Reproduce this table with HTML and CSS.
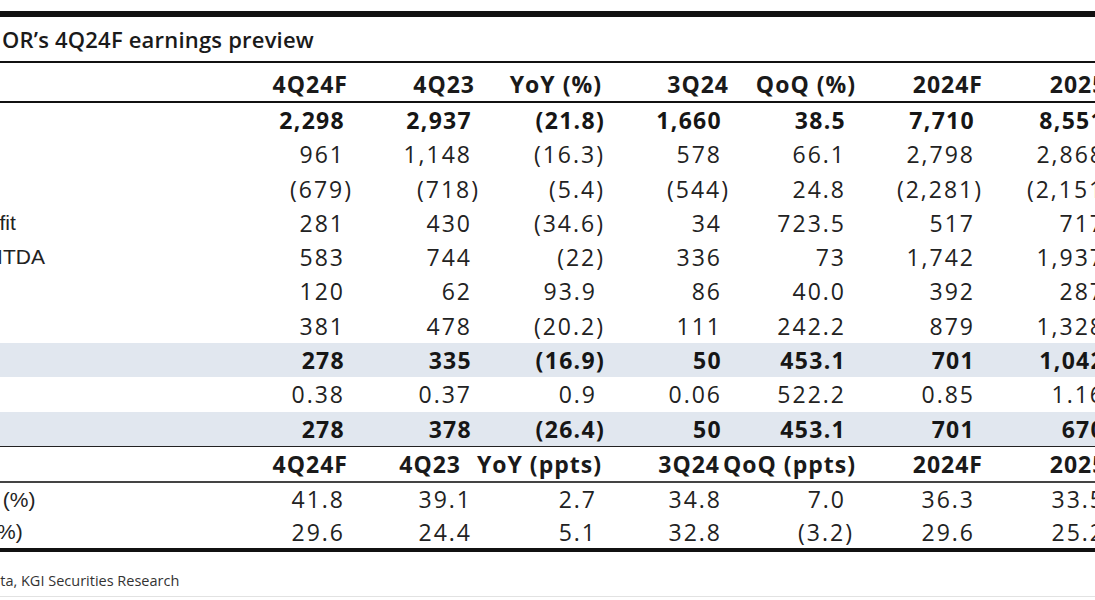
FILE: index.html
```html
<!DOCTYPE html>
<html lang="en">
<head>
<meta charset="utf-8">
<title>4Q24F earnings preview</title>
<link rel="stylesheet" href="styles.css">
</head>
<body>
<div class="frame">
  <div class="sheet">
    <div class="title">OR’s 4Q24F earnings preview</div>
    <table class="grid">
      <colgroup>
        <col class="lab"><col class="num"><col class="num"><col class="num"><col class="num"><col class="num"><col class="num"><col class="num">
      </colgroup>
      <thead>
        <tr class="head">
          <th class="label">NT$mn</th><th>4Q24F</th><th>4Q23</th><th>YoY (%)</th><th>3Q24</th><th>QoQ (%)</th><th>2024F</th><th>2025F</th>
        </tr>
      </thead>
      <tbody>
        <tr class="bold">
          <td class="label">Revenue</td><td>2,298</td><td>2,937</td><td><span class="neg">(21.8)</span></td><td>1,660</td><td>38.5</td><td>7,710</td><td>8,551</td>
        </tr>
        <tr>
          <td class="label">Gross profit</td><td>961</td><td>1,148</td><td><span class="neg">(16.3)</span></td><td>578</td><td>66.1</td><td>2,798</td><td>2,868</td>
        </tr>
        <tr>
          <td class="label">Opex</td><td><span class="neg">(679)</span></td><td><span class="neg">(718)</span></td><td><span class="neg">(5.4)</span></td><td><span class="neg">(544)</span></td><td>24.8</td><td><span class="neg">(2,281)</span></td><td><span class="neg">(2,151)</span></td>
        </tr>
        <tr>
          <td class="label">Operating profit</td><td>281</td><td>430</td><td><span class="neg">(34.6)</span></td><td>34</td><td>723.5</td><td>517</td><td>717</td>
        </tr>
        <tr>
          <td class="label">Operating EBITDA</td><td>583</td><td>744</td><td><span class="neg">(22)</span></td><td>336</td><td>73</td><td>1,742</td><td>1,937</td>
        </tr>
        <tr>
          <td class="label">Non-op</td><td>120</td><td>62</td><td>93.9</td><td>86</td><td>40.0</td><td>392</td><td>287</td>
        </tr>
        <tr>
          <td class="label">Pretax profit</td><td>381</td><td>478</td><td><span class="neg">(20.2)</span></td><td>111</td><td>242.2</td><td>879</td><td>1,328</td>
        </tr>
        <tr class="bold band">
          <td class="label">Net profit</td><td>278</td><td>335</td><td><span class="neg">(16.9)</span></td><td>50</td><td>453.1</td><td>701</td><td>1,042</td>
        </tr>
        <tr>
          <td class="label">EPS (NT$)</td><td>0.38</td><td>0.37</td><td>0.9</td><td>0.06</td><td>522.2</td><td>0.85</td><td>1.16</td>
        </tr>
        <tr class="bold band close">
          <td class="label">Core NP</td><td>278</td><td>378</td><td><span class="neg">(26.4)</span></td><td>50</td><td>453.1</td><td>701</td><td>670</td>
        </tr>
        <tr class="head2">
          <th class="label">Margins</th><th>4Q24F</th><th class="shift-a">4Q23</th><th><span class="wide">YoY (ppts)</span></th><th class="shift-b">3Q24</th><th><span class="wide">QoQ (ppts)</span></th><th>2024F</th><th>2025F</th>
        </tr>
        <tr class="m1">
          <td class="label">Gross margin (%)</td><td>41.8</td><td>39.1</td><td>2.7</td><td>34.8</td><td>7.0</td><td>36.3</td><td>33.5</td>
        </tr>
        <tr class="last">
          <td class="label">OPEX/sales (%)</td><td>29.6</td><td>24.4</td><td>5.1</td><td>32.8</td><td><span class="neg">(3.2)</span></td><td>29.6</td><td>25.2</td>
        </tr>
      </tbody>
    </table>
    <p class="source">Source: Company data, KGI Securities Research</p>
  </div>
</div>
</body>
</html>
```

FILE: styles.css
```css
html, body {
  margin: 0;
  padding: 0;
  background: #ffffff;
}

body {
  font-family: "Open Sans", "Noto Sans", sans-serif;
  color: #1d1d1d;
}

.frame {
  width: 1095px;
  height: 600px;
  overflow: hidden;
}

.sheet {
  width: 1254px;
  margin-left: -130px;
  padding-top: 11px;
}

.title {
  border-top: 6px solid #111;
  border-bottom: 2px solid #111;
  height: 44px;
  line-height: 44px;
  padding-left: 132px;
  font-size: 22px;
  font-weight: 600;
  letter-spacing: 0.2px;
  color: #1a1a1a;
}

.grid {
  width: 1254px;
  table-layout: fixed;
  border-collapse: separate;
  border-spacing: 0;
}

.grid col.lab { width: 351px; }
.grid col.num { width: 127px; }
.grid col.num:last-child { width: 141px; }

.grid th,
.grid td {
  padding: 0;
  text-align: right;
  white-space: nowrap;
  font-size: 23px;
}

.grid td {
  line-height: 34.3px;
  font-weight: 400;
  letter-spacing: 2px;
  color: #222;
}

.grid td:nth-child(2),
.grid td:nth-child(3) { padding-right: 3px; }
.grid td:nth-child(4) { padding-right: 5px; }
.grid td:nth-child(5) { padding-right: 7px; }
.grid td:nth-child(6) { padding-right: 10px; }
.grid td:nth-child(7) { padding-right: 8px; }
.grid td:nth-child(8) { padding-right: 19px; }

.grid th {
  font-weight: 700;
  letter-spacing: 1px;
  color: #1a1a1a;
}

.grid th:last-child { padding-right: 4px; }

.grid .label {
  text-align: left;
  padding-left: 1px;
  padding-right: 0;
  font-family: "Liberation Sans", Arial, sans-serif;
  font-size: 21px;
  font-weight: 400;
  letter-spacing: 0;
  color: #222;
}

.head th {
  line-height: 34px;
  padding-top: 4px;
  border-bottom: 2px solid #111;
}

.head2 th {
  line-height: 34px;
  border-bottom: 2.5px solid #444;
}

.bold td {
  font-weight: 700;
  letter-spacing: 1.3px;
  color: #161616;
}

.band td {
  background: #e1e7ef;
}

.close td {
  border-bottom: 1.5px solid #222;
}

.m1 td {
  line-height: 33px;
}

.last td {
  line-height: 32.5px;
  border-bottom: 4px solid #111;
}

.neg {
  margin-right: -8px;
}

.shift-a { padding-right: 14px !important; }
.shift-b { padding-right: 9px !important; }

.wide {
  display: inline-block;
  margin-left: -40px;
}

.source {
  margin: 19px 0 0 -9px;
  padding-bottom: 5px;
  border-bottom: 1px solid #e2e2e2;
  font-size: 14.5px;
  line-height: 20px;
  color: #333;
}
```
